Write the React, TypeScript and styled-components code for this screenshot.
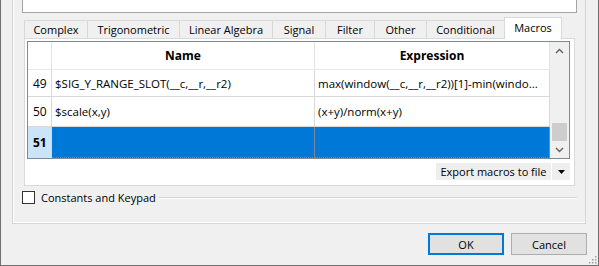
import { Fragment } from "react";
import styled, { createGlobalStyle } from "styled-components";

const GlobalStyle = createGlobalStyle`
  html, body {
    margin: 0;
    padding: 0;
    background: #f0f0f0;
  }
  body {
    font-family: "Open Sans", "Noto Sans", sans-serif;
    font-size: 11px;
    color: #000;
  }
  * {
    box-sizing: border-box;
  }
`;

const Window = styled.div`
  position: relative;
  width: 599px;
  height: 266px;
  background: #f0f0f0;
  border: 1px solid #6f6f6f;
  border-top: none;
  display: flex;
  flex-direction: column;
  overflow: hidden;
`;

const Group = styled.div`
  height: 224px;
  margin: 0 12px 0 11px;
  padding: 0 8px 0 9px;
  border: 1px solid #d5d5d5;
  border-top: none;
  box-shadow: inset 1px 0 0 #fff, inset 0 -1px 0 #fff;
  display: flex;
  flex-direction: column;
`;

const Editor = styled.div`
  height: 13px;
  background: #fff;
  border: 1px solid #a5a5a5;
  border-top: none;
`;

const TabWidget = styled.div`
  margin: 4px 2px 0;
  display: flex;
  flex-direction: column;
`;

const TabBar = styled.div`
  height: 21px;
  display: flex;
  align-items: flex-end;
`;

const Tab = styled.div<{ $w: number; $active?: boolean }>`
  width: ${(p) => p.$w}px;
  height: ${(p) => (p.$active ? 22 : 18)}px;
  margin-right: -1px;
  margin-bottom: ${(p) => (p.$active ? -1 : 0)}px;
  position: relative;
  z-index: ${(p) => (p.$active ? 1 : 0)};
  background: ${(p) => (p.$active ? "#fff" : "#f0f0f0")};
  border: 1px solid #d9d9d9;
  border-bottom: none;
  display: flex;
  align-items: center;
  justify-content: center;
  padding-bottom: ${(p) => (p.$active ? 3 : 0)}px;
  font-size: 11px;
  white-space: nowrap;
`;

const Pane = styled.div`
  height: 148px;
  background: #fff;
  border: 1px solid #d9d9d9;
  padding: 2px 4px 0 2px;
  display: flex;
  flex-direction: column;
`;

const Table = styled.div`
  height: 118px;
  border: 1px solid #828790;
  display: flex;
  background: #fff;
`;

const Grid = styled.div`
  flex: 1;
  display: grid;
  grid-template-columns: 24px 263px 1fr;
  grid-auto-rows: min-content;
  overflow: hidden;
`;

const HeadCell = styled.div`
  height: 28px;
  border-right: 1px solid #e3e3e3;
  border-bottom: 1px solid #e8e8e8;
  display: flex;
  align-items: center;
  justify-content: center;
  font-weight: 700;
  font-size: 12px;
`;

const RowHead = styled.div<{ $h: number; $sel?: boolean }>`
  height: ${(p) => p.$h}px;
  background: ${(p) => (p.$sel ? "#cce4f7" : "#fff")};
  border-right: 1px solid #d8d8d8;
  border-bottom: ${(p) => (p.$sel ? "none" : "1px solid #d8d8d8")};
  display: flex;
  align-items: center;
  padding-left: 5px;
  font-size: 12px;
  font-weight: ${(p) => (p.$sel ? 700 : 400)};
`;

const Cell = styled.div<{ $h: number; $sel?: boolean }>`
  height: ${(p) => p.$h}px;
  background: ${(p) => (p.$sel ? "#0078d7" : "#fff")};
  border-right: 1px solid ${(p) => (p.$sel ? "#7a8a9a" : "#d8d8d8")};
  border-bottom: ${(p) => (p.$sel ? "1px dotted #7a8a9a" : "1px solid #d8d8d8")};
  display: flex;
  align-items: center;
  padding-left: 3px;
  font-size: 11.5px;
  white-space: nowrap;
  overflow: hidden;
`;

const ScrollBar = styled.div`
  width: 19px;
  background: #f0f0f0;
  display: flex;
  flex-direction: column;
`;

const ScrollArrow = styled.div`
  height: 17px;
  display: flex;
  align-items: center;
  justify-content: center;
`;

const ScrollTrack = styled.div`
  flex: 1;
  display: flex;
  flex-direction: column;
  justify-content: flex-end;
  padding: 0 2px;
`;

const Thumb = styled.div`
  height: 18px;
  background: #cdcdcd;
`;

const ExportRow = styled.div`
  margin-top: 4px;
  display: flex;
  justify-content: flex-end;
  gap: 1px;
`;

const FlatButton = styled.div<{ $w: number }>`
  width: ${(p) => p.$w}px;
  height: 17px;
  background: #eeeeee;
  display: flex;
  align-items: center;
  justify-content: center;
  font-size: 11px;
  white-space: nowrap;
`;

const CheckRow = styled.div`
  margin-top: 5px;
  height: 13px;
  display: flex;
  align-items: center;
`;

const CheckBox = styled.div`
  width: 13px;
  height: 13px;
  background: #fff;
  border: 1px solid #333;
`;

const CheckLabel = styled.span`
  margin-left: 6px;
  font-size: 11px;
  white-space: nowrap;
`;

const Rule = styled.div`
  flex: 1;
  margin-left: 3px;
  height: 2px;
  border-top: 1px solid #d5d5d5;
  border-bottom: 1px solid #fff;
`;

const ButtonRow = styled.div`
  margin-top: 9px;
  padding-right: 11px;
  display: flex;
  justify-content: flex-end;
  gap: 7px;
`;

const DialogButton = styled.button<{ $default?: boolean }>`
  width: 76px;
  height: 22px;
  margin: 0;
  padding: 0;
  background: #e1e1e1;
  border: ${(p) => (p.$default ? "2px solid #0078d7" : "1px solid #adadad")};
  font-family: inherit;
  font-size: 11px;
  color: #000;
`;

const Grip = styled.svg`
  position: absolute;
  right: 1px;
  bottom: 1px;
`;

const tabs = [
  { label: "Complex", w: 64 },
  { label: "Trigonometric", w: 93 },
  { label: "Linear Algebra", w: 94 },
  { label: "Signal", w: 54 },
  { label: "Filter", w: 50 },
  { label: "Other", w: 53 },
  { label: "Conditional", w: 79 },
  { label: "Macros", w: 58, active: true },
];

const rows = [
  { n: 49, name: "$SIG_Y_RANGE_SLOT(__c,__r,__r2)", expr: "max(window(__c,__r,__r2))[1]-min(windo...", h: 27 },
  { n: 50, name: "$scale(x,y)", expr: "(x+y)/norm(x+y)", h: 30 },
  { n: 51, name: "", expr: "", h: 31, sel: true },
];

const gripDots = [
  [8, 2],
  [8, 5],
  [5, 5],
  [8, 8],
  [5, 8],
  [2, 8],
];

const Chevron = ({ up }: { up?: boolean }) => (
  <svg width="9" height="6" viewBox="0 0 9 6">
    <path
      d={up ? "M1 5 L4.5 1.5 L8 5" : "M1 1 L4.5 4.5 L8 1"}
      fill="none"
      stroke="#606060"
      strokeWidth="1.4"
    />
  </svg>
);

const App = () => {
  return (
    <>
      <GlobalStyle />
      <Window>
        <Group>
          <Editor />
          <TabWidget>
            <TabBar>
              {tabs.map((t) => (
                <Tab key={t.label} $w={t.w} $active={t.active}>
                  {t.label}
                </Tab>
              ))}
            </TabBar>
            <Pane>
              <Table>
                <Grid>
                  <HeadCell />
                  <HeadCell>Name</HeadCell>
                  <HeadCell>Expression</HeadCell>
                  {rows.map((r) => (
                    <Fragment key={r.n}>
                      <RowHead $h={r.h} $sel={r.sel}>
                        {r.n}
                      </RowHead>
                      <Cell $h={r.h} $sel={r.sel}>
                        {r.name}
                      </Cell>
                      <Cell $h={r.h} $sel={r.sel}>
                        {r.expr}
                      </Cell>
                    </Fragment>
                  ))}
                </Grid>
                <ScrollBar>
                  <ScrollArrow>
                    <Chevron up />
                  </ScrollArrow>
                  <ScrollTrack>
                    <Thumb />
                  </ScrollTrack>
                  <ScrollArrow>
                    <Chevron />
                  </ScrollArrow>
                </ScrollBar>
              </Table>
              <ExportRow>
                <FlatButton $w={115}>Export macros to file</FlatButton>
                <FlatButton $w={18}>
                  <svg width="7" height="4" viewBox="0 0 7 4">
                    <path d="M0 0 L7 0 L3.5 4 Z" fill="#000" />
                  </svg>
                </FlatButton>
              </ExportRow>
            </Pane>
          </TabWidget>
          <CheckRow>
            <CheckBox />
            <CheckLabel>Constants and Keypad</CheckLabel>
            <Rule />
          </CheckRow>
        </Group>
        <ButtonRow>
          <DialogButton $default>OK</DialogButton>
          <DialogButton>Cancel</DialogButton>
        </ButtonRow>
        <Grip width="10" height="10" viewBox="0 0 10 10">
          {gripDots.map(([x, y]) => (
            <rect key={`${x}-${y}`} x={x} y={y} width="1.5" height="1.5" fill="#a0a0a0" />
          ))}
        </Grip>
      </Window>
    </>
  );
};

export default App;
